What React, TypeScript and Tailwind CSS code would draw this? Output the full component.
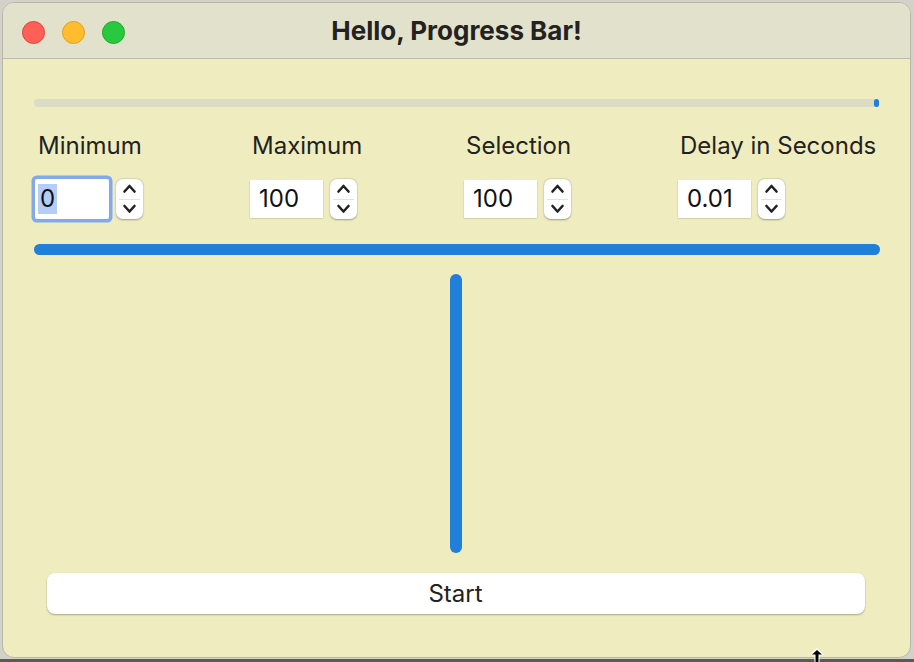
import React from 'react';

const font = { fontFamily: 'Inter, "Noto Sans", sans-serif' };

const Stepper = () => (
    <div className="flex h-[40px] w-[27px] shrink-0 flex-col items-center justify-between rounded-[7px] bg-white shadow-[0_0.5px_2px_rgba(0,0,0,0.35)]">
        <svg width="27" height="20" viewBox="0 0 27 20">
            <path d="M8.5 12.5 L13.5 7 L18.5 12.5" fill="none" stroke="#222" strokeWidth="2.6" strokeLinecap="round" strokeLinejoin="round" />
        </svg>
        <div className="h-px w-[21px] bg-[#e2e2e2]" />
        <svg width="27" height="19" viewBox="0 0 27 19">
            <path d="M8.5 6 L13.5 11.5 L18.5 6" fill="none" stroke="#222" strokeWidth="2.6" strokeLinecap="round" strokeLinejoin="round" />
        </svg>
    </div>
);

const Spinner = ({ label, value, focused = false }: { label: string; value: string; focused?: boolean }) => (
    <div className="flex w-[214px] shrink-0 flex-col">
        <div className="h-[28px] whitespace-nowrap pl-[4px] text-[24px] leading-[28px] text-[#222]">{label}</div>
        <div className="mt-[19px] flex items-center gap-[7px]">
            {focused ? (
                <div className="ml-[1px] flex h-[40px] w-[74px] shrink-0 items-center rounded-[2px] bg-white pl-[3px] shadow-[0_0_0_3.5px_#82a9ee]">
                    <span className="bg-[#b4cdf7] px-[2px] text-[24px] leading-[30px] text-[#111]">{value}</span>
                </div>
            ) : (
                <div className="ml-[2px] flex h-[38px] w-[73px] shrink-0 items-center bg-white pl-[9px] text-[24px] text-[#111] shadow-[0_0.5px_1.5px_rgba(0,0,0,0.3)]">
                    {value}
                </div>
            )}
            <Stepper />
        </div>
    </div>
);

export default function App() {
    return (
        <div className="relative flex h-[662px] w-[914px] flex-col bg-[#d2d2ca]" style={font}>
            <div className="mx-[2px] mt-[2px] flex h-[656px] w-[909px] flex-col overflow-hidden rounded-[12px] border border-[#b8b7a8] bg-[#efedc0]">
                <div className="relative flex h-[56px] shrink-0 items-center justify-center border-b border-[#bdbcab] bg-[#e2e1cc]">
                    <div className="absolute left-[19px] top-[18px] flex gap-[17px]">
                        <div className="h-[23px] w-[23px] rounded-full border border-[#e0443e] bg-[#fe5f57]" />
                        <div className="h-[23px] w-[23px] rounded-full border border-[#dea123] bg-[#febc2e]" />
                        <div className="h-[23px] w-[23px] rounded-full border border-[#1aab29] bg-[#28c840]" />
                    </div>
                    <span className="text-[26px] font-bold text-[#222]">Hello, Progress Bar!</span>
                </div>

                <div className="flex flex-1 flex-col px-[31px]">
                    <div className="mt-[40px] flex h-[8px] w-[845px] justify-end rounded-full bg-[#dcdbc6]">
                        <div className="h-[8px] w-[5px] rounded-full bg-[#1f7fdb]" />
                    </div>

                    <div className="mt-[25px] flex">
                        <Spinner label="Minimum" value="0" focused />
                        <Spinner label="Maximum" value="100" />
                        <Spinner label="Selection" value="100" />
                        <Spinner label="Delay in Seconds" value="0.01" />
                    </div>

                    <div className="mt-[25px] h-[11px] w-[846px] rounded-full bg-[#1f7fdb]" />

                    <div className="mt-[19px] flex justify-center">
                        <div className="ml-[-2px] h-[279px] w-[12px] rounded-full bg-[#1f7fdb]" />
                    </div>

                    <div className="mt-[20px] flex justify-center">
                        <button className="ml-[-2px] flex h-[41px] w-[818px] items-center justify-center rounded-[8px] bg-white text-[24px] text-[#222] shadow-[0_1px_2px_rgba(0,0,0,0.3)]">
                            Start
                        </button>
                    </div>
                </div>
            </div>
            <div className="mt-[1px] h-[3px] bg-[#5a5a55]" />

            <svg className="absolute left-[808px] top-[647px]" width="18" height="15" viewBox="0 0 18 15">
                <path d="M9 1 L16 8 L11.5 8 L11.5 15 L6.5 15 L6.5 8 L2 8 Z" fill="white" />
                <path d="M9 3 L14 7.5 L10.5 7.5 L10.5 15 L7.5 15 L7.5 7.5 L4 7.5 Z" fill="black" />
            </svg>
        </div>
    );
}
